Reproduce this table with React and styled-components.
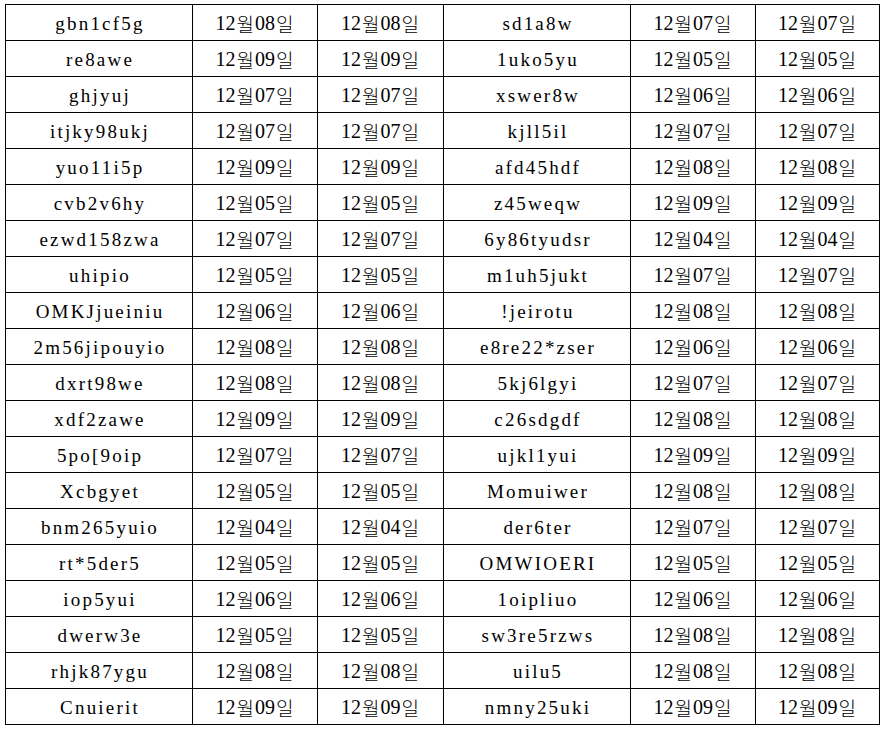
import React from 'react'
import styled, { createGlobalStyle } from 'styled-components'

const rows = [
  ['gbn1cf5g', '08', 'sd1a8w', '07'],
  ['re8awe', '09', '1uko5yu', '05'],
  ['ghjyuj', '07', 'xswer8w', '06'],
  ['itjky98ukj', '07', 'kjll5il', '07'],
  ['yuo11i5p', '09', 'afd45hdf', '08'],
  ['cvb2v6hy', '05', 'z45weqw', '09'],
  ['ezwd158zwa', '07', '6y86tyudsr', '04'],
  ['uhipio', '05', 'm1uh5jukt', '07'],
  ['OMKJjueiniu', '06', '!jeirotu', '08'],
  ['2m56jipouyio', '08', 'e8re22*zser', '06'],
  ['dxrt98we', '08', '5kj6lgyi', '07'],
  ['xdf2zawe', '09', 'c26sdgdf', '08'],
  ['5po[9oip', '07', 'ujkl1yui', '09'],
  ['Xcbgyet', '05', 'Momuiwer', '08'],
  ['bnm265yuio', '04', 'der6ter', '07'],
  ['rt*5der5', '05', 'OMWIOERI', '05'],
  ['iop5yui', '06', '1oipliuo', '06'],
  ['dwerw3e', '05', 'sw3re5rzws', '08'],
  ['rhjk87ygu', '08', 'uilu5', '08'],
  ['Cnuierit', '09', 'nmny25uki', '09'],
]

const Global = createGlobalStyle`
  html, body {
    margin: 0;
    padding: 0;
    background: #fff;
    overflow: hidden;
  }
`

const Page = styled.div`
  padding: 4px 0 0 5px;
`

const Sheet = styled.div`
  display: grid;
  grid-template-columns: 187px 125px 126px 187px 125px 124px;
  grid-auto-rows: 36px;
  width: max-content;
  border-left: 1px solid #000;
  border-top: 1px solid #000;
`

const Cell = styled.div`
  display: flex;
  align-items: center;
  justify-content: center;
  padding-top: 2px;
  border-right: 1px solid #000;
  border-bottom: 1px solid #000;
  color: #000;
  white-space: nowrap;
  font-family: "Liberation Serif", "Noto Sans CJK KR", serif;
  font-size: ${p => (p.$code ? '19px' : '20px')};
  letter-spacing: ${p => (p.$code ? '2.2px' : '0')};
  text-indent: ${p => (p.$code ? '2px' : '0')};
`

const Han = styled.span`
  font-family: "Noto Sans CJK KR", sans-serif;
  font-size: 19px;
  font-weight: 300;
  margin: 0 1px;
`

const DateText = ({ day }) => (
  <>
    12<Han>월</Han>{day}<Han>일</Han>
  </>
)

export default function App() {
  return (
    <Page>
      <Global />
      <Sheet>
        {rows.map(([a, d1, b, d2], i) => (
          <React.Fragment key={i}>
            <Cell $code>{a}</Cell>
            <Cell><DateText day={d1} /></Cell>
            <Cell><DateText day={d1} /></Cell>
            <Cell $code>{b}</Cell>
            <Cell><DateText day={d2} /></Cell>
            <Cell><DateText day={d2} /></Cell>
          </React.Fragment>
        ))}
      </Sheet>
    </Page>
  )
}
